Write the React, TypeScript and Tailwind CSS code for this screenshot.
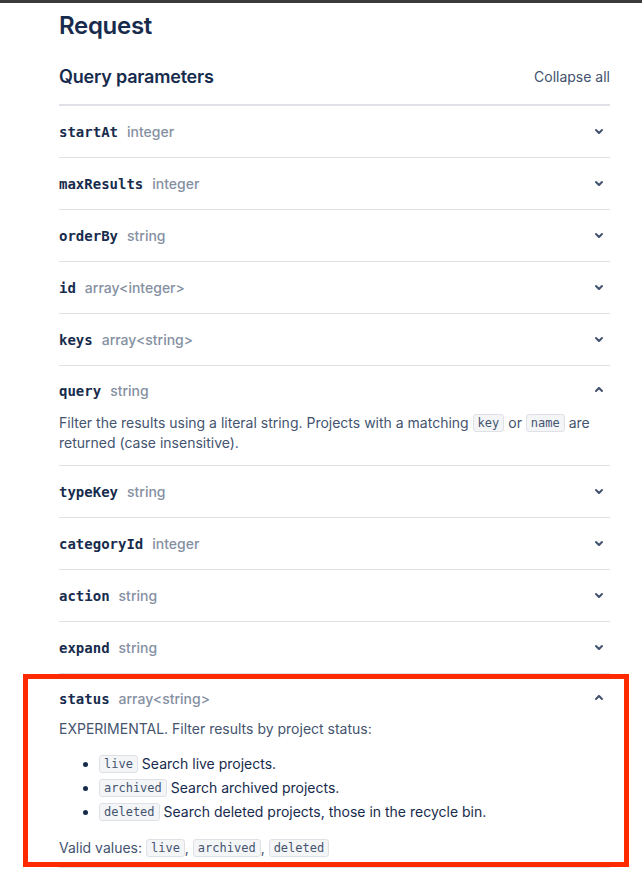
import type { ReactNode } from 'react'

const sans = "font-['Inter','Noto_Sans',sans-serif]"
const mono = "font-['DejaVu_Sans_Mono','Liberation_Mono',monospace]"

function ChevronDown() {
  return (
    <svg width="24" height="24" viewBox="0 0 24 24" className="text-[#42526e]">
      <path
        fill="currentColor"
        d="M8.292 10.293a1.009 1.009 0 000 1.419l2.939 2.965c.218.215.5.322.779.322s.556-.107.769-.322l2.93-2.955a1.01 1.01 0 000-1.419.987.987 0 00-1.406 0l-2.298 2.317-2.307-2.327a.99.99 0 00-1.406 0z"
      />
    </svg>
  )
}

function ChevronUp() {
  return (
    <svg width="24" height="24" viewBox="0 0 24 24" className="text-[#42526e]">
      <path
        fill="currentColor"
        d="M11.221 9.322l-2.929 2.955a1.009 1.009 0 000 1.419.986.986 0 001.405 0l2.298-2.317 2.307 2.327a.989.989 0 001.407 0 1.01 1.01 0 000-1.419l-2.94-2.965A1.106 1.106 0 0011.991 9c-.279 0-.557.107-.77.322z"
      />
    </svg>
  )
}

function Code({ children }: { children: ReactNode }) {
  return (
    <code
      className={`${mono} inline-block rounded-[3px] border border-[#dfe1e6] bg-[#f4f5f7] px-[4px] text-[12px] leading-[16px] text-[#44546f] align-[1px]`}
    >
      {children}
    </code>
  )
}

function Title({ name, type, open }: { name: string; type: string; open?: boolean }) {
  return (
    <div className="flex h-full items-center justify-between">
      <div className="flex items-baseline gap-[9px]">
        <span className={`${mono} text-[14px] font-bold text-[#172b4d]`}>{name}</span>
        <span className="text-[14px] font-medium text-[#8590a2]">{type}</span>
      </div>
      <div className="-mr-[1px] -mt-[2px] flex">{open ? <ChevronUp /> : <ChevronDown />}</div>
    </div>
  )
}

const before = [
  ['startAt', 'integer'],
  ['maxResults', 'integer'],
  ['orderBy', 'string'],
  ['id', 'array<integer>'],
  ['keys', 'array<string>'],
]

const after = [
  ['typeKey', 'string'],
  ['categoryId', 'integer'],
  ['action', 'string'],
  ['expand', 'string'],
]

export default function App() {
  return (
    <div className={`${sans} min-h-[880px] bg-white`}>
      <div className="h-[3px] bg-[#3b3b3b]" />
      <div className="ml-[59px] w-[551px]">
        <h1 className="mt-[9px] text-[24px] font-semibold leading-[28px] tracking-[-0.3px] text-[#172b4d]">
          Request
        </h1>

        <div className="mt-[25px] flex items-center justify-between">
          <h2 className="text-[18px] font-semibold leading-[24px] tracking-[-0.2px] text-[#172b4d]">
            Query parameters
          </h2>
          <span className="text-[14px] leading-[24px] text-[#42526e]">Collapse all</span>
        </div>
        <div className="mt-[15px] h-[2px] bg-[#dfe1e6]" />

        {before.map(([n, t]) => (
          <div key={n} className="h-[52px] border-b border-[#dfe1e6]">
            <Title name={n} type={t} />
          </div>
        ))}

        <div className="border-b border-[#dfe1e6] pb-3">
          <div className="h-[50px]">
            <Title name="query" type="string" open />
          </div>
          <p className="-mt-[3px] text-[14px] leading-[20px] text-[#44546f]">
            Filter the results using a literal string. Projects with a matching <Code>key</Code> or{' '}
            <Code>name</Code> are returned (case insensitive).
          </p>
        </div>

        {after.map(([n, t]) => (
          <div key={n} className="h-[52px] border-b border-[#dfe1e6]">
            <Title name={n} type={t} />
          </div>
        ))}

        <div className="-ml-[36px] -mr-[19px] border-[5px] border-[#ff2a00] pl-[31px] pr-[14px] pb-[4px]">
          <div className="h-[40px]">
            <Title name="status" type="array<string>" open />
          </div>
          <p className="text-[14px] leading-[20px] text-[#44546f]">
            EXPERIMENTAL. Filter results by project status:
          </p>
          <ul className="mt-[13px] list-disc pl-10 text-[14px] leading-[24px] text-[#172b4d]">
            <li>
              <Code>live</Code> Search live projects.
            </li>
            <li>
              <Code>archived</Code> Search archived projects.
            </li>
            <li>
              <Code>deleted</Code> Search deleted projects, those in the recycle bin.
            </li>
          </ul>
          <p className="mt-[14px] text-[14px] leading-[20px] text-[#44546f]">
            Valid values: <Code>live</Code>, <Code>archived</Code>, <Code>deleted</Code>
          </p>
        </div>
        <div className="h-px bg-[#dfe1e6]" />
      </div>
    </div>
  )
}
